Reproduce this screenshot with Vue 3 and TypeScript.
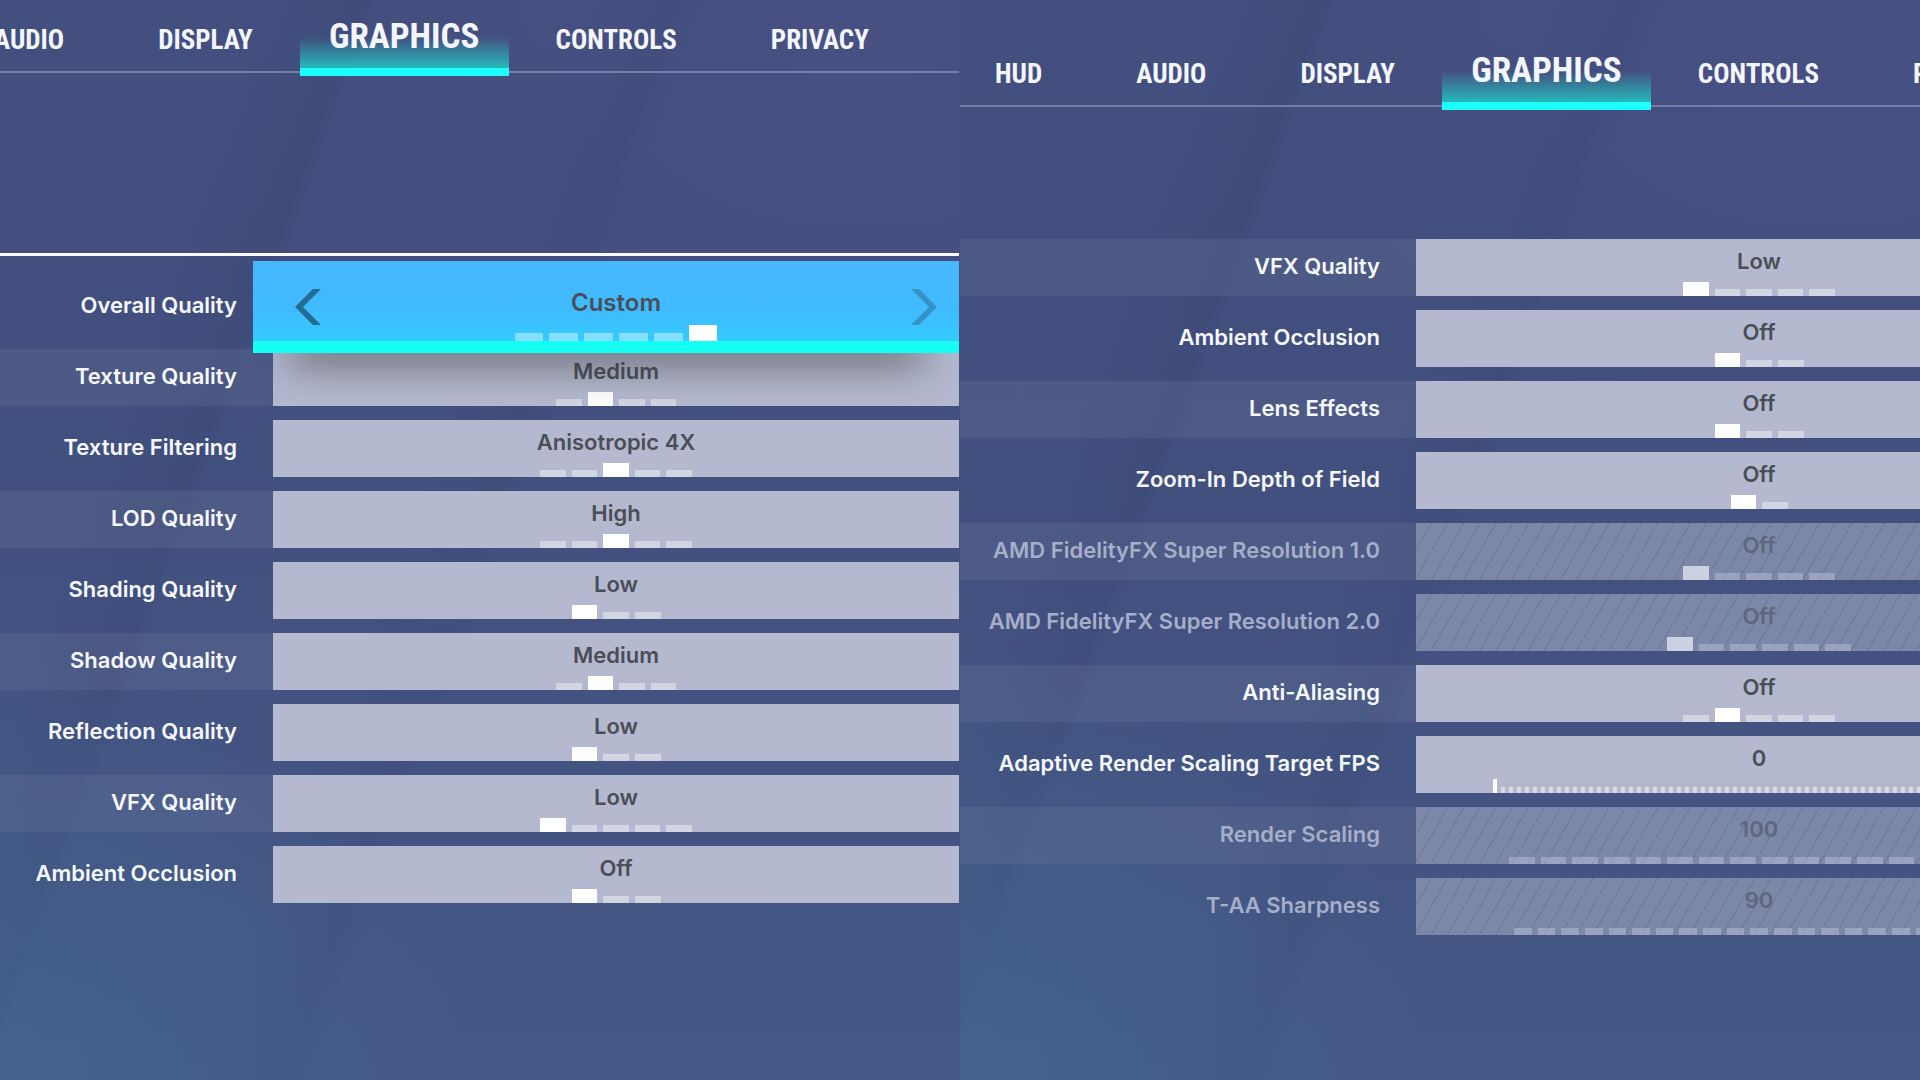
<script setup lang="ts">
import { reactive } from 'vue'

interface Setting {
  id: string
  label: string
  value: string
  steps: number
  // index of the highlighted step
  active: number
  // track width in pixels
  track: number
  disabled?: boolean
  selected?: boolean
  fine?: boolean
}

interface Panel {
  id: string
  tabs: string[]
  settings: Setting[]
}

const panels = reactive<Panel[]>([
  {
    id: 'upper',
    tabs: ['AUDIO', 'DISPLAY', 'GRAPHICS', 'CONTROLS', 'PRIVACY'],
    settings: [
      { id: 'overall', label: 'Overall Quality', value: 'Custom', steps: 6, active: 5, track: 203, selected: true },
      { id: 'texture', label: 'Texture Quality', value: 'Medium', steps: 4, active: 1, track: 120 },
      { id: 'filtering', label: 'Texture Filtering', value: 'Anisotropic 4X', steps: 5, active: 2, track: 152 },
      { id: 'lod', label: 'LOD Quality', value: 'High', steps: 5, active: 2, track: 152 },
      { id: 'shading', label: 'Shading Quality', value: 'Low', steps: 3, active: 0, track: 89 },
      { id: 'shadow', label: 'Shadow Quality', value: 'Medium', steps: 4, active: 1, track: 120 },
      { id: 'reflection', label: 'Reflection Quality', value: 'Low', steps: 3, active: 0, track: 89 },
      { id: 'vfx', label: 'VFX Quality', value: 'Low', steps: 5, active: 0, track: 152 },
      { id: 'ao', label: 'Ambient Occlusion', value: 'Off', steps: 3, active: 0, track: 89 },
    ],
  },
  {
    id: 'lower',
    tabs: ['HUD', 'AUDIO', 'DISPLAY', 'GRAPHICS', 'CONTROLS', 'PRIVACY'],
    settings: [
      { id: 'vfx', label: 'VFX Quality', value: 'Low', steps: 5, active: 0, track: 152 },
      { id: 'ao', label: 'Ambient Occlusion', value: 'Off', steps: 3, active: 0, track: 89 },
      { id: 'lens', label: 'Lens Effects', value: 'Off', steps: 3, active: 0, track: 89 },
      { id: 'dof', label: 'Zoom-In Depth of Field', value: 'Off', steps: 2, active: 0, track: 57 },
      { id: 'fsr1', label: 'AMD FidelityFX Super Resolution 1.0', value: 'Off', steps: 5, active: 0, track: 152, disabled: true },
      { id: 'fsr2', label: 'AMD FidelityFX Super Resolution 2.0', value: 'Off', steps: 6, active: 0, track: 184, disabled: true },
      { id: 'aa', label: 'Anti-Aliasing', value: 'Off', steps: 5, active: 1, track: 152 },
      { id: 'fps', label: 'Adaptive Render Scaling Target FPS', value: '0', steps: 67, active: 0, track: 532, fine: true },
      { id: 'scaling', label: 'Render Scaling', value: '100', steps: 16, active: 15, track: 500, disabled: true },
      { id: 'sharpness', label: 'T-AA Sharpness', value: '90', steps: 21, active: 18, track: 490, disabled: true },
    ],
  },
])

function step(s: Setting, by: number) {
  s.active = Math.min(s.steps - 1, Math.max(0, s.active + by))
}
</script>

<template>
  <main class="page">
    <section v-for="p in panels" :key="p.id" class="panel" :class="p.id">
      <nav class="tabs" aria-label="Options">
        <button
          v-for="t in p.tabs"
          :key="t"
          type="button"
          class="tab"
          :class="{ current: t === 'GRAPHICS' }"
        >{{ t }}</button>
      </nav>

      <div class="settings">
        <div
          v-for="s in p.settings"
          :key="s.id"
          class="row"
          :class="{ disabled: s.disabled, selected: s.selected }"
        >
          <label class="label" :for="p.id + '-' + s.id">{{ s.label }}</label>
          <div class="field">
            <span class="value">{{ s.value }}</span>
            <span class="track" :class="{ fine: s.fine }" :style="{ width: s.track + 'px' }">
              <i v-for="n in s.steps" :key="n" :class="{ on: n - 1 === s.active }"></i>
            </span>
            <input
              :id="p.id + '-' + s.id"
              v-model.number="s.active"
              class="slider"
              type="range"
              min="0"
              :max="s.steps - 1"
              :disabled="s.disabled"
            />
            <template v-if="s.selected">
              <button type="button" class="arrow prev" aria-label="Previous" @click="step(s, -1)">
                <svg viewBox="0 0 26 36" width="26" height="36"><path d="M18 0h8L8 18l18 18h-8L0 18z" /></svg>
              </button>
              <button type="button" class="arrow next" aria-label="Next" @click="step(s, 1)">
                <svg viewBox="0 0 26 36" width="26" height="36"><path d="M8 0H0l18 18L0 36h8l18-18z" /></svg>
              </button>
            </template>
          </div>
        </div>
      </div>
    </section>
  </main>
</template>

<style>
body {
  background: #435583;
}
</style>

<style scoped>
.page {
  display: grid;
  grid-template-columns: 1fr 1fr;
  min-height: 100vh;
  overflow: hidden;
  font-family: Inter, Roboto, sans-serif;
}

.panel {
  min-width: 0;
  box-sizing: border-box;
  overflow: hidden;
  background:
    radial-gradient(ellipse 50% 40% at 0 100%, rgba(68, 108, 150, 0.5), transparent),
    linear-gradient(110deg, transparent 20%, rgba(50, 62, 105, 0.18) 27%, transparent 28%, transparent 44%, rgba(50, 62, 105, 0.14) 50%, transparent 52%),
    radial-gradient(ellipse 60% 40% at 90% 0, rgba(80, 80, 140, 0.4), transparent),
    linear-gradient(#434f7e, #42507f 45%, #445785);
}

.upper {
  --label-width: 273px;
  padding-right: 1px;
}

.lower {
  --label-width: 456px;
  padding-top: 34px;
}

.tabs {
  position: relative;
  display: flex;
  height: 76px;
}

.upper .tabs {
  margin-left: -53px;
}

.lower .tabs {
  margin-left: -12px;
}

.tabs::before {
  content: '';
  position: absolute;
  inset: auto 0 3px;
  height: 2px;
  background: #757da5;
}

.tab {
  position: relative;
  display: flex;
  flex: none;
  justify-content: center;
  box-sizing: border-box;
  border: 0;
  padding: 24px 47px 0;
  background: none;
  color: #f4f6ff;
  font: 700 27px/32px 'Roboto Condensed', 'Liberation Sans Narrow', sans-serif;
}

.tab.current {
  width: 209px;
  padding: 17px 0 0;
  border-bottom: 8px solid #1cfffa;
  background: linear-gradient(transparent 54%, rgba(36, 190, 190, 0.95)) padding-box;
  font-size: 35px;
  line-height: 40px;
}

.upper .settings {
  margin-top: 177px;
  border-top: 3px solid #fbfbff;
  padding-top: 22px;
}

.lower .settings {
  margin-top: 129px;
}

.row {
  display: grid;
  grid-template-columns: var(--label-width) minmax(686px, 1fr);
  height: 57px;
  margin-bottom: 14px;
}

.label {
  display: flex;
  align-items: center;
  justify-content: flex-end;
  padding: 0 36px 4px 0;
  color: #f6f8ff;
  font-size: 22px;
  font-weight: 600;
  line-height: 28px;
  white-space: nowrap;
}

.upper .row:nth-child(even) .label,
.lower .row:nth-child(odd) .label {
  background: rgba(255, 255, 255, 0.06);
}

.field {
  position: relative;
  display: flex;
  flex-direction: column;
  align-items: center;
  justify-content: space-between;
  background: #b4b9cf;
}

.value {
  padding-top: 8px;
  color: #4b4e57;
  font-size: 22px;
  font-weight: 600;
  line-height: 28px;
}

.track {
  display: flex;
  align-items: flex-end;
  gap: 6px;
}

.track i {
  flex: 1;
  height: 7px;
  background: rgba(255, 255, 255, 0.4);
}

.track .on {
  height: 14px;
  background: #fff;
}

.fine {
  gap: 4px;
}

.fine i:not(.on) {
  height: 6px;
  background: rgba(255, 255, 255, 0.5);
}

.slider {
  position: absolute;
  inset: auto 0 0;
  width: 100%;
  height: 16px;
  margin: 0;
  opacity: 0;
}

.selected .field {
  z-index: 1;
  margin: -17px 0 -18px -20px;
  border-bottom: 12px solid #16fff5;
  background: linear-gradient(#47b7ff, #40bbff 60%, #34cbff) padding-box;
  box-shadow: 0 44px 40px -36px rgba(50, 50, 52, 0.9);
}

.selected .value {
  padding: 28px 0 0 20px;
  font-size: 24px;
}

.selected .track {
  margin-left: 20px;
}

.selected .track i {
  height: 8px;
}

.selected .track .on {
  height: 16px;
}

.arrow {
  position: absolute;
  top: 28px;
  border: 0;
  padding: 0;
  background: none;
}

.arrow svg {
  display: block;
  fill: #246c92;
}

.prev {
  left: 42px;
}

.next {
  right: 22px;
}

.next svg {
  fill: #3592c5;
}

.disabled .label {
  color: #a6aeca;
}

.disabled .field {
  background:
    repeating-linear-gradient(120deg, transparent 0 13px, rgba(75, 87, 130, 0.35) 13px 14px),
    #7d88a9;
}

.disabled .value {
  color: #5f667d;
}

.disabled .track i {
  background: rgba(200, 205, 230, 0.4);
}

.disabled .track .on {
  background: #ccd1e1;
}
</style>
